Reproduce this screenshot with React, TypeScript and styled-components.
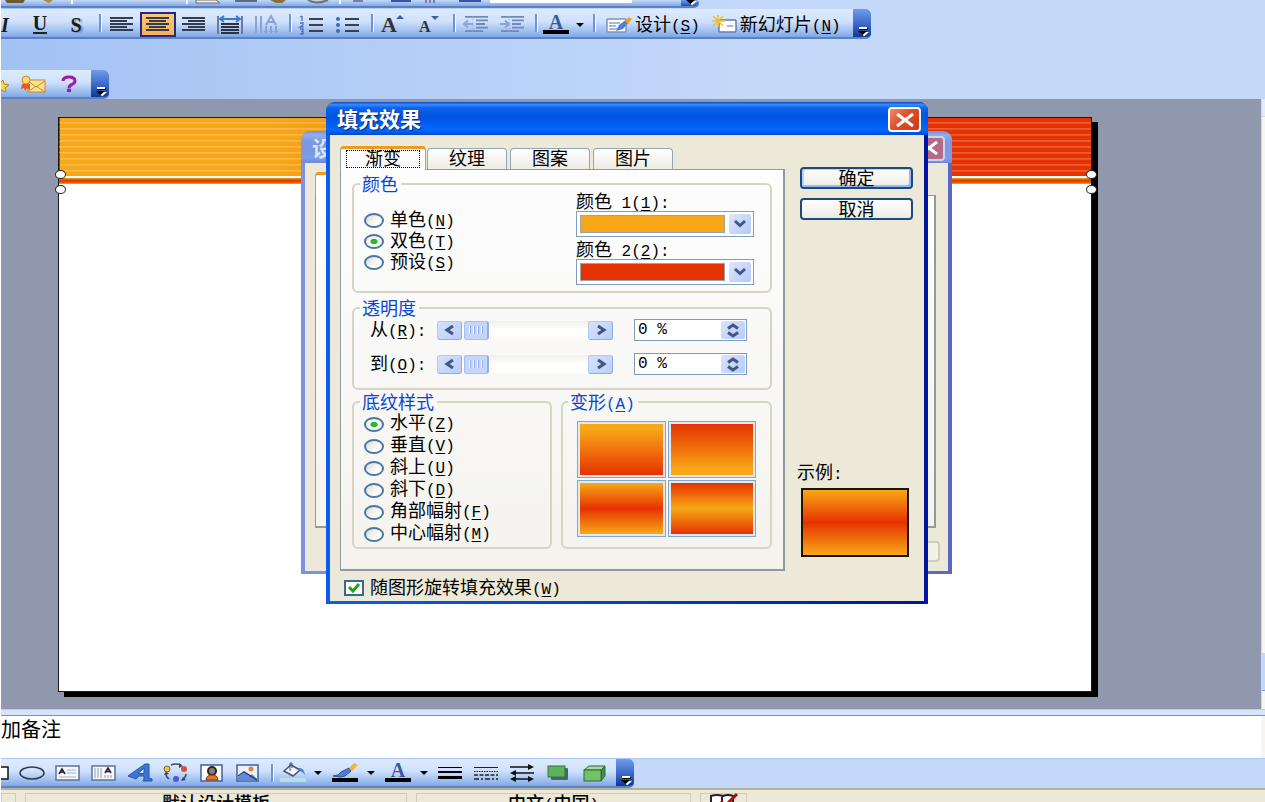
import React from "react";
import styled, { createGlobalStyle, css } from "styled-components";

const ORANGE = "#f8a817";
const RED = "#e63200";
const CJK = `"Noto Sans CJK SC", sans-serif`;

const GlobalStyle = createGlobalStyle`
  *, *::before, *::after { box-sizing: border-box; }
  body {
    margin: 0;
    background: #ffffff;
    color: #000000;
    font-family: ${CJK};
    font-size: 18px;
    line-height: 20px;
  }
  button, input, select { font: inherit; color: inherit; margin: 0; }
  svg { overflow: visible; }
`;

/* ---------- application frame ---------- */

const Frame = styled.div`
  display: flex;
  flex-direction: column;
  height: 100vh;
  min-height: 700px;
  padding-left: 1px;
  overflow: hidden;
  position: relative;
`;

const Dock = styled.header`
  display: flex;
  flex-direction: column;
  background: linear-gradient(90deg, #a3c2f4 0%, #c4d9fa 60%, #c4d9fa 100%);
`;

const Toolbar = styled.div<{ $h: number }>`
  display: flex;
  align-items: stretch;
  align-self: flex-start;
  height: ${(p) => p.$h}px;
  border-radius: 0 5px 5px 0;
  overflow: hidden;
  background: linear-gradient(180deg, #ddebfe 0%, #cfe1fc 45%, #9dbef0 80%, #80a7e4 100%);
  border-bottom: 2px solid #5b82c4;
`;

const CutToolbar = styled(Toolbar)`
  border-radius: 0 0 5px 0;
  margin-bottom: 1px;
  background: linear-gradient(180deg, #c3d8f8 0%, #83a8e4 100%);
`;

const DockSpace = styled.div`
  height: 31px;
`;

const Tool = styled.button<{ $w?: number; $on?: boolean; $start?: boolean }>`
  display: flex;
  align-items: center;
  justify-content: ${(p) => (p.$start ? "flex-start" : "center")};
  gap: 3px;
  flex: none;
  width: ${(p) => (p.$w ? `${p.$w}px` : "auto")};
  padding: 3px 0 0;
  border: 0;
  background: none;
  white-space: nowrap;
  ${(p) =>
    p.$on &&
    css`
      margin: 3px 0 0;
      height: 25px;
      padding: 0;
      border: 2px solid #1d2a8c;
      background: linear-gradient(180deg, #fdc878, #fbb055);
    `}
`;

const TextTool = styled(Tool)`
  margin-left: 8px;
  margin-right: 3px;
`;

const Letter = styled.span<{ $italic?: boolean; $underline?: boolean; $shadow?: boolean }>`
  font: bold 20px/22px "Liberation Serif", serif;
  font-style: ${(p) => (p.$italic ? "italic" : "normal")};
  border-bottom: ${(p) => (p.$underline ? "2px solid #222" : "0")};
  text-shadow: ${(p) => (p.$shadow ? "2px 1px 1px #7d93bd" : "none")};
  line-height: ${(p) => (p.$underline ? "17px" : "22px")};
  color: #1b1b1b;
`;

const Divider = styled.span`
  flex: none;
  width: 10px;
  height: 18px;
  align-self: center;
  background: linear-gradient(90deg, transparent 5px, #7295d2 5px, #7295d2 7px, #f2f7ff 7px, #f2f7ff 8px, transparent 8px);
`;

const Spacer = styled.span<{ $w: number }>`
  flex: none;
  width: ${(p) => p.$w}px;
`;

const CapButton = styled.button`
  display: flex;
  align-items: flex-end;
  justify-content: center;
  flex: none;
  width: 18px;
  margin-left: auto;
  margin-bottom: -2px;
  padding: 0 0 3px 2px;
  border: 0;
  border-radius: 0 5px 5px 0;
  background: linear-gradient(180deg, #6f9ceb 0%, #3c69c6 50%, #05308f 100%);
`;

const Key = styled.span`
  font-family: "Liberation Mono", monospace;
  font-size: 16px;
  u { text-underline-offset: 2px; }
`;

const Icon = ({ w = 28, h = 20, children }: { w?: number; h?: number; children: React.ReactNode }) => (
  <svg width={w} height={h} viewBox={`0 0 ${w} ${h}`} fill="none" aria-hidden="true">
    {children}
  </svg>
);

const CapGlyph = () => (
  <Icon w={12} h={10}>
    <path d="M2 2h9v2H2z" fill="#000" />
    <path d="M2 1h8v2H2z" fill="#fff" />
    <path d="M4 6h8L7 10.500z" fill="#fff" />
    <path d="M1 5h9l-4.500 4z" fill="#000" />
  </Icon>
);

const Cap = ({ label }: { label: string }) => (
  <CapButton type="button" aria-label={label}>
    <CapGlyph />
  </CapButton>
);

const Drop = ({ label }: { label: string }) => (
  <Tool type="button" $w={16} aria-label={label}>
    <Icon w={10} h={6}>
      <path d="M1 1h8l-4 4z" fill="#000" />
    </Icon>
  </Tool>
);

const Mnemonic = ({ k, tail = "" }: { k: string; tail?: string }) => (
  <Key>
    (<u>{k}</u>){tail}
  </Key>
);

const AlignIcon = ({ mode }: { mode: "left" | "center" | "right" }) => {
  const widths = [23, 17, 23, 17, 23];
  return (
    <Icon>
      {widths.map((w, i) => {
        const x = mode === "left" ? 2 : mode === "right" ? 25 - w : 2 + (23 - w) / 2;
        return <rect key={i} x={x} y={2 + i * 3} width={w} height="2" fill="#333c4c" />;
      })}
    </Icon>
  );
};

const ListIcon = ({ numbered }: { numbered?: boolean }) => (
  <Icon>
    <path d="M11 4h14M11 10h14M11 16h14" stroke="#39414f" strokeWidth="2" />
    {numbered ? (
      <path
        d="M4 1v5M2 2l2-1M2 8h3v2L2 12h3.500M2 14h3v5H2M3 16.500h2"
        stroke="#4a72c0"
        strokeWidth="1.300"
      />
    ) : (
      <g fill="#4467b5">
        <circle cx="4" cy="4" r="2" />
        <circle cx="4" cy="10" r="2" />
        <circle cx="4" cy="16" r="2" />
      </g>
    )}
  </Icon>
);

const IndentIcon = ({ out }: { out?: boolean }) => (
  <Icon>
    <path d="M3 2h23M14 6h12M14 10h9M14 14h12M3 18h18" stroke="#7189b9" strokeWidth="2" transform="scale(1 .9)" />
    <path d="M2 9h9" stroke="#8ea5d0" strokeWidth="2" />
    <path d={out ? "M6 5.500L2 9l4 3.500" : "M7 5.500L11 9l-4 3.500"} stroke="#8ea5d0" strokeWidth="2" />
    <path d="M11 1v17" stroke="#8ea5d0" strokeDasharray="1 2" />
  </Icon>
);

const ColorAIcon = () => (
  <Icon>
    <text x="14" y="14" textAnchor="middle" fontFamily="Liberation Serif" fontWeight="bold" fontSize="20" fill="#3b5a9c">
      A
    </text>
    <rect x="1" y="15" width="26" height="4" fill="#000" />
  </Icon>
);

const CutIcons = () => (
  <svg width="489" height="6" viewBox="0 0 489 6" aria-hidden="true">
    <path d="M4 0h20l-2 3H6z" fill="#6b5a33" />
    <path d="M42 0h10l-4 3z" fill="#b28a34" />
    <path d="M71 0v4M186 0v4M339 0v4" stroke="#f2f7ff" strokeWidth="2" />
    <path d="M195 0h20l4 3h-24z" fill="#f0f0f0" stroke="#716f75" />
    <path d="M234 1h22" stroke="#5b6c88" strokeWidth="2" />
    <path d="M269 0h16l-4 3h-6z" fill="#8b6f3b" />
    <path d="M307 0q8 5 20 0" fill="#c6d2de" stroke="#67737f" strokeWidth="2" />
    <path d="M352 1h10M425 0v3M429 0v3M433 0v3" stroke="#7a7fa8" strokeWidth="2" />
    <path d="M390 1h20M458 1h22" stroke="#3c50a0" strokeWidth="2" />
  </svg>
);

const CutBox = styled.div`
  width: 142px;
  height: 3px;
  background: #ffffff;
  margin-right: 49px;
`;

/* ---------- slide area ---------- */

const Workspace = styled.main`
  display: flex;
  flex: 1;
  min-height: 0;
  background: #9098ae;
`;

const SlideWell = styled.div`
  flex: 1;
  display: flex;
  padding: 18px 169px 17px 57px;
`;

const Slide = styled.div`
  position: relative;
  flex: 1;
  border: 1px solid #1a1a1a;
  background: #ffffff;
  box-shadow: 6px 5px 0 0 #000000;
`;

const SlideBand = styled.div`
  height: 58px;
  border-left: 1px dashed #6b4a10;
  background:
    repeating-linear-gradient(180deg, transparent 0, transparent 4px, rgba(255, 255, 255, 0.25) 4px, rgba(255, 255, 255, 0.12) 6px),
    linear-gradient(90deg, ${ORANGE} 20%, ${RED} 84%);
`;

const SlideRule = styled.div`
  height: 6px;
  margin-top: 2px;
  background: linear-gradient(180deg, #f8a817 0, #e63c00 2px, #e64600 4px, #f8a817 6px);
`;

const Handle = styled.i<{ $side: "left" | "right"; $low?: boolean }>`
  position: absolute;
  ${(p) => (p.$side === "left" ? "left: -4px" : "right: -6px")};
  top: ${(p) => (p.$low ? 67 : 52)}px;
  width: 11px;
  height: 9px;
  border: 1px solid #222222;
  border-radius: 50%;
  background: #ffffff;
`;

const ScrollEdge = styled.div`
  display: flex;
  flex-direction: column;
  width: 4px;
  border-left: 1px solid #d9d7c9;
  background: #f6f5ee;
`;

const ScrollThumb = styled.div<{ $h: number; $push?: boolean }>`
  height: ${(p) => p.$h}px;
  margin-top: ${(p) => (p.$push ? "auto" : "0")};
  margin-bottom: ${(p) => (p.$push ? "18px" : "0")};
  background: ${(p) => (p.$push ? "#c4d9fa" : "#e3ecfd")};
  border-bottom: 1px solid ${(p) => (p.$push ? "#7aa0e0" : "#d9d7c9")};
`;

const Splitter = styled.div`
  height: 7px;
  background: #d6e5fc;
  border-top: 1px solid #b7cdf2;
  border-bottom: 1px solid #6b93dc;
`;

const Notes = styled.section`
  height: 42px;
  padding-top: 3px;
  font-size: 20px;
  background: #ffffff;
  white-space: nowrap;
  border-right: 4px solid #f6f5ee;
`;

const DrawDock = styled.div`
  background: #c4d9fa;
  border-top: 1px solid #a9c6f5;
`;

const DrawToolbar = styled(Toolbar)`
  display: inline-flex;
  vertical-align: top;
  ${Tool} { padding-top: 1px; }
`;

const Status = styled.footer`
  display: flex;
  gap: 9px;
  height: 14px;
  padding-top: 3px;
  overflow: hidden;
  background: #ece9d8;
  border-top: 2px solid #b4b09c;
`;

const StatusCell = styled.div<{ $w: number }>`
  width: ${(p) => p.$w}px;
  flex: none;
  height: 22px;
  border: 1px solid #cfccbc;
  text-align: center;
  font-weight: 500;
  line-height: 16px;
  white-space: nowrap;
`;

/* ---------- dialogs ---------- */

const Window = styled.div<{ $back?: boolean }>`
  position: absolute;
  isolation: isolate;
  left: ${(p) => (p.$back ? 301 : 326)}px;
  top: ${(p) => (p.$back ? 131 : 102)}px;
  width: ${(p) => (p.$back ? 651 : 602)}px;
  height: ${(p) => (p.$back ? "443px" : "auto")};
  display: flex;
  flex-direction: column;
  border-radius: 9px 9px 0 0;
  padding: 0 4px 3px;
  background: ${(p) =>
    p.$back ? "linear-gradient(90deg, #7a92e4, #6f85dc 60%, #5a66c8)" : "linear-gradient(90deg, #0a5df0, #0038c8 60%, #0014a0)"};
`;

const TitleBar = styled.div<{ $back?: boolean }>`
  display: flex;
  align-items: center;
  justify-content: space-between;
  height: ${(p) => (p.$back ? 32 : 33)}px;
  margin: 0 -4px;
  padding: 2px 7px 0 11px;
  border-radius: 9px 9px 0 0;
  color: ${(p) => (p.$back ? "#dbe5fb" : "#ffffff")};
  background: ${(p) =>
    p.$back
      ? "linear-gradient(180deg, #6f8ee0 0%, #92aef0 12%, #7c96e2 35%, #7d9be8 85%, #7189d8 100%)"
      : "linear-gradient(180deg, #0a48c4 0%, #3a8cf8 8%, #0a62ee 18%, #0054e0 45%, #0068ff 85%, #0048d0 100%)"};
`;

const Title = styled.h1<{ $back?: boolean }>`
  margin: 0;
  padding-bottom: 3px;
  font-size: 21px;
  line-height: 24px;
  font-weight: 700;
  text-shadow: ${(p) => (p.$back ? "none" : "1px 1px 1px #0a2a80")};
`;

const CloseButton = styled.button<{ $back?: boolean }>`
  display: flex;
  align-items: center;
  justify-content: center;
  width: 33px;
  height: 25px;
  padding: 0;
  border: 2px solid ${(p) => (p.$back ? "#c9d4f4" : "#ffffff")};
  border-radius: 4px;
  background: ${(p) => (p.$back ? "#b56a86" : "linear-gradient(135deg, #ee8a6a 0%, #dd4f2a 45%, #cc3a14 100%)")};
`;

const DialogBody = styled.form`
  background: #ece9d8;
  padding: 11px 11px 3px 10px;
`;

const DialogMain = styled.div`
  display: flex;
  gap: 15px;
`;

const Pages = styled.div`
  width: 445px;
`;

const TabStrip = styled.div`
  display: flex;
  align-items: flex-end;
  gap: 2px;
  height: 23px;
`;

const Tab = styled.button<{ $active?: boolean }>`
  position: relative;
  width: ${(p) => (p.$active ? 86 : 80)}px;
  height: ${(p) => (p.$active ? 24 : 21)}px;
  margin-bottom: ${(p) => (p.$active ? -1 : 0)}px;
  margin-right: ${(p) => (p.$active ? -1 : 1)}px;
  padding: ${(p) => (p.$active ? "0 5px 1px" : "0 0 4px")};
  border: 1px solid #91a7b4;
  border-bottom: 0;
  border-top: ${(p) => (p.$active ? "3px solid #f09a1c" : "1px solid #91a7b4")};
  border-radius: 4px 4px 0 0;
  background: ${(p) => (p.$active ? "#fdfdfd" : "linear-gradient(180deg, #ffffff, #ecebe4)")};
  line-height: 16px;
`;

const FocusRing = styled.span`
  display: block;
  height: 18px;
  border: 1px dotted #000000;
  line-height: 12px;
`;

const Page = styled.div`
  border: 1px solid #919b9c;
  border-right-width: 2px;
  border-bottom-width: 2px;
  padding: 6px 11px 20px;
  background: linear-gradient(180deg, #fdfdfe, #f4f3ee);
`;

const Group = styled.fieldset`
  min-width: 0;
  margin: 0;
  padding: 0 16px 6px 10px;
  border: 2px solid #d6d5c2;
  border-radius: 6px;

  legend {
    height: 16px;
    margin-left: -4px;
    padding: 0 3px 0 2px;
    line-height: 14px;
    color: #0b46d2;
  }
`;

const ColorGroup = styled(Group)`
  margin-bottom: 7px;
`;
const AlphaGroup = styled(Group)`
  margin-bottom: 4px;
  padding-bottom: 14px;
  padding-right: 23px;
`;
const StyleGroup = styled(Group)`
  width: 200px;
  padding-top: 3px;
  padding-bottom: 1px;
`;
const VariantGroup = styled(Group)`
  flex: 1;
  padding: 11px 14px 10px;
  legend { margin-left: -9px; }
`;

const ColorColumns = styled.div`
  display: flex;
  justify-content: space-between;
`;

const GroupRow = styled.div`
  display: flex;
  gap: 9px;
`;

const RadioList = styled.div<{ $pitch: number; $top?: number }>`
  padding-top: ${(p) => p.$top || 0}px;
  label {
    display: flex;
    align-items: center;
    gap: 6px;
    height: ${(p) => p.$pitch}px;
    line-height: 18px;
    white-space: nowrap;
  }
  label > span { padding-bottom: 2px; }
`;

const Radio = styled.input.attrs({ type: "radio" })`
  appearance: none;
  flex: none;
  width: 20px;
  height: 15px;
  border: 2px solid #4a77a4;
  border-radius: 50%;
  background: linear-gradient(135deg, #dcdcd4, #ffffff 70%);
  &:checked {
    background: radial-gradient(ellipse 4px 3px at center, #2fb52f 80%, #f4f6f2 100%);
  }
`;

const ColorField = styled.div`
  width: 178px;
  & + & { margin-top: 3px; }
  label { display: block; height: 19px; line-height: 16px; white-space: nowrap; }
`;

const Combo = styled.div`
  display: flex;
  height: 26px;
  padding: 2px 2px 2px 3px;
  border: 1px solid #7f9db9;
  background: #ffffff;
`;

const ColorSelect = styled.select<{ $color: string }>`
  appearance: none;
  flex: 1;
  height: 18px;
  margin: 1px 4px 0 0;
  border: 1px solid #9aa3ad;
  border-radius: 0;
  background: ${(p) => p.$color};
`;

const ComboArrow = styled.span`
  display: flex;
  align-items: center;
  justify-content: center;
  width: 22px;
  border-radius: 2px;
  background: linear-gradient(135deg, #dce7fe, #b3c9f8);
`;

const AlphaRow = styled.div`
  display: flex;
  align-items: center;
  height: 20px;
  margin-top: 4px;
  padding-left: 6px;
  & + & { margin-top: 14px; }
  label { width: 68px; white-space: nowrap; }
`;

const ScrollTrack = styled.div`
  display: flex;
  gap: 2px;
  width: 176px;
  height: 19px;
  margin-right: 21px;
  background: linear-gradient(180deg, #f1f0ea, #ffffff 50%, #fbfbf9);
`;

const ArrowButton = styled.button`
  display: flex;
  align-items: center;
  justify-content: center;
  flex: none;
  width: 25px;
  padding: 0;
  border: 1px solid #b4c8f0;
  border-right-color: #8faee6;
  border-bottom-color: #8faee6;
  border-radius: 3px;
  background: linear-gradient(135deg, #d5e2fe, #b9cefb);
`;

const Slider = styled.input.attrs({ type: "range" })`
  appearance: none;
  flex: 1;
  min-width: 0;
  background: transparent;
  &::-webkit-slider-thumb {
    appearance: none;
    width: 25px;
    height: 19px;
    border: 1px solid #a8c0f0;
    border-right: 2px solid #8faee6;
    border-radius: 3px;
    background:
      repeating-linear-gradient(90deg, #f2f6ff 0, #f2f6ff 1px, #92aee8 1px, #92aee8 2px, #c5d5fc 2px, #c5d5fc 4px) center / 14px 8px no-repeat,
      #c5d5fc;
  }
`;

const Spin = styled.div`
  display: flex;
  width: 113px;
  height: 22px;
  padding: 1px;
  border: 1px solid #7f9db9;
  background: #ffffff;
  input {
    flex: 1;
    min-width: 0;
    padding: 0 0 0 2px;
    border: 0;
    background: none;
    font-family: "Liberation Mono", monospace;
    font-size: 16px;
  }
`;

const SpinButtons = styled.div`
  display: flex;
  flex-direction: column;
  width: 24px;
  border-radius: 2px;
  background: linear-gradient(135deg, #d9e4fe, #b6cbfa);
  button {
    display: flex;
    align-items: center;
    justify-content: center;
    flex: 1;
    min-height: 0;
    padding: 0;
    border: 0;
    background: none;
  }
`;

const VariantGrid = styled.div`
  display: grid;
  grid-template-columns: 1fr 1fr;
  gap: 2px;
`;

const Variant = styled.button<{ $fill: string }>`
  height: 57px;
  padding: 2px;
  border: 1px solid #86a5c4;
  background: ${(p) => p.$fill} content-box, #dfeaf5;
`;

const Side = styled.div`
  display: flex;
  flex-direction: column;
  flex: 1;
  padding-top: 21px;
`;

const PushButton = styled.button<{ $primary?: boolean }>`
  height: 22px;
  margin-bottom: 9px;
  padding: 0 0 3px;
  border: 2px solid #1b4a80;
  border-radius: 4px;
  background: linear-gradient(180deg, #ffffff, #ecebe5);
  box-shadow: ${(p) => (p.$primary ? "inset 2px 1px 0 #b9d0f8, inset -2px -2px 0 #98b8f0" : "none")};
  line-height: 14px;
`;

const Sample = styled.figure`
  margin: auto 4px 14px 0;
  figcaption { margin: 0 0 3px -3px; white-space: nowrap; }
`;

const SampleFill = styled.div`
  height: 69px;
  margin-left: 1px;
  border: 2px solid #1c1408;
  background: linear-gradient(180deg, ${ORANGE}, ${RED} 50%, ${ORANGE});
`;

const CheckLine = styled.label`
  display: flex;
  align-items: center;
  gap: 6px;
  height: 20px;
  margin: 7px 0 0 4px;
  white-space: nowrap;
`;

const CheckWrap = styled.span`
  display: grid;
  align-items: center;
  justify-items: center;
  svg, input { grid-area: 1 / 1; }
  svg { pointer-events: none; z-index: 1; }
  input {
    appearance: none;
    width: 20px;
    height: 16px;
    border: 2px solid #3a6890;
    background: #ffffff;
  }
`;

const BackBody = styled.div`
  flex: 1;
  display: flex;
  flex-direction: column;
  align-items: flex-end;
  gap: 13px;
  padding: 9px 12px 9px 10px;
  background: #ece9d8;
`;

const BackPage = styled.div`
  flex: 1;
  width: 100%;
  display: flex;
  flex-direction: column;
`;

const BackTab = styled.div`
  width: 90px;
  height: 24px;
  margin-bottom: -1px;
  z-index: 1;
  border: 1px solid #91a7b4;
  border-top: 3px solid #f09a1c;
  border-bottom: 0;
  border-radius: 4px 4px 0 0;
  background: #fdfdfd;
`;

const BackPanel = styled.div`
  flex: 1;
  border: 1px solid #919b9c;
  border-width: 1px 2px 2px 1px;
  background: linear-gradient(180deg, #fdfdfe, #f4f3ee);
`;

const BackButton = styled.div`
  width: 112px;
  height: 21px;
  margin-right: -4px;
  border: 2px solid #cfccba;
  border-radius: 4px;
  background: #f4f2e8;
`;

const Chevron = ({ dir }: { dir: "left" | "right" | "down" }) => (
  <Icon w={16} h={12}>
    <path
      d={dir === "left" ? "M11 2L5 6l6 4" : dir === "right" ? "M5 2l6 4-6 4" : "M3 3l5 4.500L13 3"}
      stroke="#42567e"
      strokeWidth="3"
    />
  </Icon>
);

const CrossIcon = () => (
  <Icon w={20} h={16}>
    <path d="M2 2l16 12M18 2L2 14" stroke="#fff" strokeWidth="3" />
  </Icon>
);

const AlphaField = ({ id, text, k }: { id: string; text: string; k: string }) => (
  <AlphaRow>
    <label htmlFor={id}>
      {text}
      <Mnemonic k={k} tail=":" />
    </label>
    <ScrollTrack>
      <ArrowButton type="button" aria-label="减少">
        <Chevron dir="left" />
      </ArrowButton>
      <Slider id={id} min={0} max={100} defaultValue={0} />
      <ArrowButton type="button" aria-label="增加">
        <Chevron dir="right" />
      </ArrowButton>
    </ScrollTrack>
    <Spin>
      <input aria-label={text} defaultValue="0 %" />
      <SpinButtons>
        <button type="button" aria-label="加">
          <Icon w={14} h={6}>
            <path d="M2 5.500L7 2l5 3.500" stroke="#42567e" strokeWidth="3" />
          </Icon>
        </button>
        <button type="button" aria-label="减">
          <Icon w={14} h={6}>
            <path d="M2 .5L7 4l5-3.500" stroke="#42567e" strokeWidth="3" />
          </Icon>
        </button>
      </SpinButtons>
    </Spin>
  </AlphaRow>
);

const ColorChoice = ({ n, color }: { n: number; color: string }) => (
  <ColorField>
    <label htmlFor={`color${n}`}>
      颜色
      <Key> {n}</Key>
      <Mnemonic k={String(n)} tail=":" />
    </label>
    <Combo>
      <ColorSelect id={`color${n}`} $color={color}>
        <option value={color} />
      </ColorSelect>
      <ComboArrow>
        <Chevron dir="down" />
      </ComboArrow>
    </Combo>
  </ColorField>
);

type Option = [string, string];
const colorModes: Option[] = [["单色", "N"], ["双色", "T"], ["预设", "S"]];
const shadings: Option[] = [
  ["水平", "Z"],
  ["垂直", "V"],
  ["斜上", "U"],
  ["斜下", "D"],
  ["角部幅射", "F"],
  ["中心幅射", "M"],
];
const variants = [
  `linear-gradient(180deg, ${ORANGE} 10%, ${RED})`,
  `linear-gradient(180deg, ${RED}, ${ORANGE} 90%)`,
  `linear-gradient(180deg, ${ORANGE}, ${RED} 50%, ${ORANGE})`,
  `linear-gradient(180deg, ${RED}, ${ORANGE} 50%, ${RED})`,
];

const RadioOptions = ({ name, items, checked }: { name: string; items: Option[]; checked: number }) => (
  <>
    {items.map(([text, k], i) => (
      <label key={k}>
        <Radio name={name} defaultChecked={i === checked} />
        <span>
          {text}
          <Mnemonic k={k} />
        </span>
      </label>
    ))}
  </>
);

const FillEffects = () => (
  <Window role="dialog" aria-label="填充效果">
    <TitleBar>
      <Title>填充效果</Title>
      <CloseButton type="button" aria-label="关闭">
        <CrossIcon />
      </CloseButton>
    </TitleBar>
    <DialogBody onSubmit={(e) => e.preventDefault()}>
      <DialogMain>
        <Pages>
          <TabStrip role="tablist">
            <Tab type="button" role="tab" aria-selected="true" $active>
              <FocusRing>渐变</FocusRing>
            </Tab>
            {["纹理", "图案", "图片"].map((t) => (
              <Tab key={t} type="button" role="tab" aria-selected="false">
                {t}
              </Tab>
            ))}
          </TabStrip>
          <Page>
            <ColorGroup>
              <legend>颜色</legend>
              <ColorColumns>
                <RadioList $pitch={21} $top={18}>
                  <RadioOptions name="mode" items={colorModes} checked={1} />
                </RadioList>
                <div>
                  <ColorChoice n={1} color={ORANGE} />
                  <ColorChoice n={2} color={RED} />
                </div>
              </ColorColumns>
            </ColorGroup>
            <AlphaGroup>
              <legend>透明度</legend>
              <AlphaField id="from" text="从" k="R" />
              <AlphaField id="to" text="到" k="O" />
            </AlphaGroup>
            <GroupRow>
              <StyleGroup>
                <legend>底纹样式</legend>
                <RadioList $pitch={22}>
                  <RadioOptions name="shade" items={shadings} checked={0} />
                </RadioList>
              </StyleGroup>
              <VariantGroup>
                <legend>
                  变形
                  <Mnemonic k="A" />
                </legend>
                <VariantGrid>
                  {variants.map((v, i) => (
                    <Variant key={i} type="button" aria-label={`变形 ${i + 1}`} $fill={v} />
                  ))}
                </VariantGrid>
              </VariantGroup>
            </GroupRow>
          </Page>
        </Pages>
        <Side>
          <PushButton $primary>确定</PushButton>
          <PushButton type="button">取消</PushButton>
          <Sample>
            <figcaption>
              示例<Key>:</Key>
            </figcaption>
            <SampleFill />
          </Sample>
        </Side>
      </DialogMain>
      <CheckLine>
        <CheckWrap>
          <input type="checkbox" defaultChecked />
          <Icon w={14} h={12}>
            <path d="M2 5l4 4 6-7" stroke="#21a121" strokeWidth="3" />
          </Icon>
        </CheckWrap>
        <span>
          随图形旋转填充效果
          <Mnemonic k="W" />
        </span>
      </CheckLine>
    </DialogBody>
  </Window>
);

const BackDialog = () => (
  <Window $back>
    <TitleBar $back>
      <Title as="h2" $back>
        设
      </Title>
      <CloseButton type="button" aria-label="关闭" $back>
        <CrossIcon />
      </CloseButton>
    </TitleBar>
    <BackBody>
      <BackPage>
        <BackTab />
        <BackPanel />
      </BackPage>
      <BackButton />
    </BackBody>
  </Window>
);

const FormatToolbar = () => (
  <Toolbar $h={30} role="toolbar" aria-label="格式">
    <Tool type="button" $w={21} $start>
      <Letter $italic>I</Letter>
    </Tool>
    <Tool type="button" $w={36}>
      <Letter $underline>U</Letter>
    </Tool>
    <Tool type="button" $w={36}>
      <Letter $shadow>S</Letter>
    </Tool>
    <Divider />
    <Tool type="button" $w={36} aria-label="左对齐">
      <AlignIcon mode="left" />
    </Tool>
    <Tool type="button" $w={36} $on aria-label="居中">
      <AlignIcon mode="center" />
    </Tool>
    <Tool type="button" $w={36} aria-label="右对齐">
      <AlignIcon mode="right" />
    </Tool>
    <Tool type="button" $w={36} aria-label="分散对齐">
      <Icon>
        <path d="M2 1v18M26 1v18" stroke="#6a7ca4" strokeWidth="2" />
        <path d="M5 4h18M8 1L4 4l4 3M20 1l4 3-4 3" stroke="#3f74cf" strokeWidth="2" />
        <path d="M5 9h18M5 12h18M5 15h18M5 18h18" stroke="#2c3444" strokeWidth="2" />
      </Icon>
    </Tool>
    <Tool type="button" $w={36} aria-label="更改文字方向">
      <Icon>
        <path d="M4 1v17M9 1v17M14 11v7M19 11v7M24 11v7" stroke="#8ca3d0" strokeWidth="2" />
        <path d="M12 16l2 2 2-2M17 16l2 2 2-2M22 16l2 2 2-2" stroke="#8ca3d0" />
        <path d="M14 10l5-9 5 9M16 7h6" stroke="#8ca3d0" strokeWidth="2" />
      </Icon>
    </Tool>
    <Divider />
    <Tool type="button" $w={36} aria-label="编号">
      <ListIcon numbered />
    </Tool>
    <Tool type="button" $w={36} aria-label="项目符号">
      <ListIcon />
    </Tool>
    <Divider />
    <Tool type="button" $w={36} aria-label="增大字号">
      <Icon>
        <text x="1" y="17" fontFamily="Liberation Serif" fontWeight="bold" fontSize="22" fill="#333">
          A
        </text>
        <path d="M16 4h8l-4-4z" fill="#3c5fa8" />
      </Icon>
    </Tool>
    <Tool type="button" $w={36} aria-label="减小字号">
      <Icon>
        <text x="3" y="17" fontFamily="Liberation Serif" fontWeight="bold" fontSize="16" fill="#333">
          A
        </text>
        <path d="M15 1h8l-4 4z" fill="#3c5fa8" />
      </Icon>
    </Tool>
    <Divider />
    <Tool type="button" $w={36} aria-label="减少缩进量">
      <IndentIcon out />
    </Tool>
    <Tool type="button" $w={36} aria-label="增加缩进量">
      <IndentIcon />
    </Tool>
    <Divider />
    <Tool type="button" $w={32} aria-label="字体颜色">
      <ColorAIcon />
    </Tool>
    <Drop label="字体颜色选项" />
    <Divider />
    <TextTool type="button">
      <Icon w={26}>
        <rect x="1" y="4" width="19" height="13" rx="1" fill="#fff" stroke="#7e93bd" strokeWidth="1.500" />
        <path d="M3 8h11M3 11h7M3 14h9" stroke="#a3b7df" strokeWidth="2" />
        <path d="M10 16l3-6 8-6 3 2-7 8z" fill="#4f7dd4" />
        <path d="M19 6l4-4 3 2-4 5z" fill="#f0a020" />
      </Icon>
      <span>
        设计
        <Mnemonic k="S" />
      </span>
    </TextTool>
    <TextTool type="button">
      <Icon w={26}>
        <rect x="8" y="5" width="17" height="12" rx="1" fill="#fff" stroke="#5f7db5" strokeWidth="1.500" />
        <path d="M16 11h6" stroke="#a3b7df" strokeWidth="2" />
        <path d="M1 6h13M7 0v12M2 1l10 10M12 1L2 11" stroke="#f2bf30" strokeWidth="1.500" />
      </Icon>
      <span>
        新幻灯片
        <Mnemonic k="N" />
      </span>
    </TextTool>
    <Spacer $w={9} />
    <Cap label="工具栏选项" />
  </Toolbar>
);

const ReviewToolbar = () => (
  <Toolbar $h={29} role="toolbar" aria-label="审阅">
    <Tool type="button" $w={14} $start aria-label="收藏">
      <Icon w={9} h={16}>
        <path d="M-1 6l3-3 1 4 5 1-4 3 1 4-5-2z" fill="#ffd83a" stroke="#b48a10" />
      </Icon>
    </Tool>
    <Tool type="button" $w={36} aria-label="邮件">
      <Icon w={26}>
        <rect x="8" y="5" width="17" height="12" fill="#ffe394" stroke="#c98a28" />
        <path d="M8 17l8-6 9 6M8 6l8 6 9-6" stroke="#c98a28" />
        <circle cx="6" cy="5" r="4" fill="#ffd968" stroke="#c98a28" />
        <path d="M2 9h8v6l-3-2-2 3-1-3-3 1z" fill="#e0592c" />
      </Icon>
    </Tool>
    <Tool type="button" $w={36} aria-label="帮助">
      <Icon w={18}>
        <path d="M3 6q0-4 6-4 6 0 6 4 0 2-3 3.500-3 1-3 4" stroke="#9a1fa6" strokeWidth="3" />
        <rect x="7" y="14" width="4" height="3" fill="#9a1fa6" />
      </Icon>
    </Tool>
    <Spacer $w={4} />
    <Cap label="工具栏选项" />
  </Toolbar>
);

const DrawingToolbar = () => (
  <DrawToolbar $h={29} role="toolbar" aria-label="绘图">
    <Tool type="button" $w={13} $start aria-label="矩形">
      <Icon w={9}>
        <rect x="-9" y="4" width="16" height="12" fill="#fff" stroke="#111" strokeWidth="1.500" />
      </Icon>
    </Tool>
    <Tool type="button" $w={36} aria-label="椭圆">
      <Icon>
        <ellipse cx="14" cy="10" rx="12" ry="6" stroke="#333c4c" strokeWidth="1.500" />
      </Icon>
    </Tool>
    <Tool type="button" $w={36} aria-label="文本框">
      <Icon>
        <rect x="2" y="3" width="23" height="14" fill="#f6f8fc" stroke="#5d7199" strokeWidth="1.500" />
        <path d="M5 11l3-5 3 5M6 9h4" stroke="#222" strokeWidth="1.500" />
        <path d="M13 7h9M13 10h9M5 14h17" stroke="#9fb2d4" />
      </Icon>
    </Tool>
    <Tool type="button" $w={36} aria-label="竖排文本框">
      <Icon>
        <rect x="2" y="3" width="23" height="14" fill="#f6f8fc" stroke="#5d7199" strokeWidth="1.500" />
        <path d="M15 10l3-5 3 5M16 8.500h4" stroke="#222" strokeWidth="1.500" />
        <path d="M5 5v10M8 5v10M11 5v10M15 12v3M18 12v3M21 12v3" stroke="#8b9cc0" />
      </Icon>
    </Tool>
    <Tool type="button" $w={36} aria-label="艺术字">
      <Icon>
        <path
          fillRule="evenodd"
          d="M2 13L19 1h4v14l3 1v2h-9l1-2v-3h-5l-3 3zM12 10.500h6V5z"
          fill="#3f74d2"
          stroke="#2456ae"
        />
      </Icon>
    </Tool>
    <Tool type="button" $w={35} aria-label="图示">
      <Icon>
        <path d="M9 2q5-2 10 0M24 11q0 3-3 5M7 16q-3-2-3-5" stroke="#3c4a66" strokeWidth="1.500" />
        <path d="M17 0l4 3-4 2zM24 17l-5 1 2-4zM2 12l2-4 3 3z" fill="#3c4a66" />
        <circle cx="5" cy="6" r="3" fill="#ecc63a" stroke="#7a6a30" />
        <circle cx="22" cy="6" r="3" fill="#d8503c" />
        <circle cx="14" cy="16" r="3" fill="#4b59cf" />
      </Icon>
    </Tool>
    <Tool type="button" $w={37} aria-label="剪贴画">
      <Icon>
        <rect x="3" y="2" width="21" height="16" fill="#fff" stroke="#3c5fa8" strokeWidth="1.500" />
        <circle cx="14" cy="8" r="4" fill="#8a8176" stroke="#2c2620" strokeWidth="2" />
        <path d="M8 17q0-5 6-5t6 5z" fill="#e8731c" stroke="#8a3a08" />
      </Icon>
    </Tool>
    <Tool type="button" $w={36} aria-label="图片">
      <Icon>
        <rect x="3" y="2" width="21" height="16" fill="#eaf1fd" stroke="#3c5fa8" strokeWidth="1.500" />
        <path d="M4 14l6-4 5 3 3-2 6 6H4z" fill="#5d8ade" />
        <path d="M4 13l6-4 13 8" stroke="#2c4272" strokeWidth="1.500" />
        <circle cx="17" cy="6" r="2.500" fill="#ef7e32" />
      </Icon>
    </Tool>
    <Divider />
    <Tool type="button" $w={34} aria-label="填充颜色">
      <Icon>
        <rect x="1" y="15" width="26" height="4" fill="#b5e0e4" />
        <path d="M5 8l7-6 9 5-7 6z" fill="#f4f8ff" stroke="#42567e" strokeWidth="1.500" />
        <path d="M11 8V0h2v5" stroke="#42567e" />
        <path d="M19 5q6-1 7 7-3-4-6-4z" fill="#4a7cd8" />
      </Icon>
    </Tool>
    <Drop label="填充颜色选项" />
    <Tool type="button" $w={37} aria-label="线条颜色">
      <Icon>
        <rect x="1" y="15" width="26" height="4" fill="#000" />
        <path d="M2 13q6 0 8-4l8-4 2 3-6 5q-4 2-12 0z" fill="#4f7dd4" stroke="#2b4f9c" />
        <path d="M18 5l5-5 4 2-6 6z" fill="#f2b440" />
      </Icon>
    </Tool>
    <Drop label="线条颜色选项" />
    <Tool type="button" $w={37} aria-label="字体颜色">
      <ColorAIcon />
    </Tool>
    <Drop label="字体颜色选项" />
    <Tool type="button" $w={36} aria-label="线型">
      <Icon>
        <path d="M2 4.500h24" stroke="#000" />
        <path d="M2 9h24" stroke="#000" strokeWidth="2" />
        <path d="M2 14.500h24" stroke="#000" strokeWidth="3" />
      </Icon>
    </Tool>
    <Tool type="button" $w={36} aria-label="虚线线型">
      <Icon>
        <path d="M2 4.500h24" stroke="#222" />
        <path d="M2 8.500h24" stroke="#222" strokeDasharray="1.500 1" />
        <path d="M2 12h24" stroke="#222" strokeWidth="1.500" strokeDasharray="4 1.500" />
        <path d="M2 16h24" stroke="#222" strokeWidth="1.500" strokeDasharray="5 2 2 2" />
      </Icon>
    </Tool>
    <Tool type="button" $w={36} aria-label="箭头样式">
      <Icon>
        <path d="M2 4h20M6 10h20M6 16h16" stroke="#111" strokeWidth="1.500" />
        <path d="M20 1l6 3-6 3zM8 7l-6 3 6 3zM8 13l-6 3 6 3zM20 13l6 3-6 3z" fill="#111" />
      </Icon>
    </Tool>
    <Tool type="button" $w={36} aria-label="阴影样式">
      <Icon>
        <rect x="7" y="5" width="17" height="12" rx="1" fill="#4a6470" />
        <rect x="4" y="3" width="17" height="11" fill="#5fb25c" stroke="#2c7a36" />
      </Icon>
    </Tool>
    <Tool type="button" $w={36} aria-label="三维效果样式">
      <Icon>
        <path d="M4 7l5-4h16l-4 4z" fill="#a9dba0" stroke="#2f6b38" />
        <path d="M21 7l4-4v10l-4 5z" fill="#3f8d49" stroke="#2f6b38" />
        <rect x="4" y="7" width="17" height="11" fill="#74c06c" stroke="#2f6b38" />
      </Icon>
    </Tool>
    <Spacer $w={4} />
    <Cap label="工具栏选项" />
  </DrawToolbar>
);

export default function App() {
  return (
    <>
      <GlobalStyle />
      <Frame>
        <Dock>
          <CutToolbar $h={8}>
            <CutIcons />
            <CutBox />
            <Cap label="工具栏选项" />
          </CutToolbar>
          <FormatToolbar />
          <DockSpace />
          <ReviewToolbar />
        </Dock>
        <Workspace>
          <SlideWell>
            <Slide>
              <SlideBand />
              <SlideRule />
              <Handle $side="left" />
              <Handle $side="left" $low />
              <Handle $side="right" />
              <Handle $side="right" $low />
            </Slide>
          </SlideWell>
          <ScrollEdge>
            <ScrollThumb $h={18} />
            <ScrollThumb $h={38} $push />
          </ScrollEdge>
        </Workspace>
        <Splitter />
        <Notes>加备注</Notes>
        <DrawDock>
          <DrawingToolbar />
        </DrawDock>
        <Status>
          <StatusCell $w={15} />
          <StatusCell $w={382}>默认设计模板</StatusCell>
          <StatusCell $w={275}>
            中文<Key>(</Key>中国<Key>)</Key>
          </StatusCell>
          <StatusCell $w={47}>
            <Icon w={34} h={18}>
              <path d="M4 2q6-2 12 0 5-2 10 0v12q-6-2-11 0-5-2-11 0zM15 2v12" fill="#fff" stroke="#222" strokeWidth="2" />
              <path d="M14 7l4 5L30 0" stroke="#a01414" strokeWidth="3" />
            </Icon>
          </StatusCell>
        </Status>
        <BackDialog />
        <FillEffects />
      </Frame>
    </>
  );
}
